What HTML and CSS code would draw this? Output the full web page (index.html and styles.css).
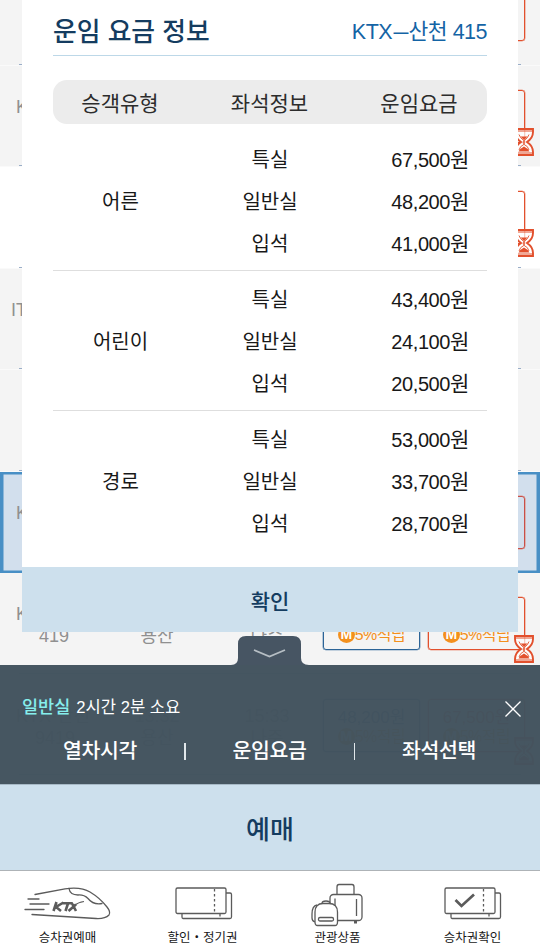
FILE: index.html
```html
<!DOCTYPE html>
<html lang="ko">
<head>
<meta charset="utf-8">
<title>운임 요금 정보</title>
<link rel="stylesheet" href="styles.css">
</head>
<body>
<svg width="0" height="0" class="defs">
  <symbol id="glass" viewBox="0 0 20 28">
    <path d="M1 1H19V4Q19 10 13 14Q19 18 19 24V27H1V24Q1 18 7 14Q1 10 1 4V1Z" fill="#fff" fill-opacity=".7" stroke="#e2502d" stroke-width="1.900"/>
    <path d="M1 3H19M1 25H19" stroke="#e2502d" stroke-width="1"/>
    <path d="M5 6.500Q6 10 9.800 12.500V16.500Q6 18 5 22M15 6.500Q14 10 10.200 12.500V16.500Q14 18 15 22" fill="none" stroke="#e2502d" stroke-width=".9"/>
    <path d="M6.500 8.500H13.500L10 12ZM4.500 23.500Q6 20.500 10 18.500Q14 20.500 15.500 23.500Z" fill="#e2502d"/>
  </symbol>
</svg>
<div class="phone">
  <main class="list">
    <div class="row"><div class="name"></div><div class="stop"></div><div class="stop"></div><div class="seat empty"></div><div class="seat special"></div></div>
    <div class="row"><div class="name">K</div><div class="stop"></div><div class="stop"></div><div class="seat empty"></div><div class="seat special"><svg class="glass"><use href="#glass"/></svg></div></div>
    <div class="row white"><div class="name"></div><div class="stop"></div><div class="stop"></div><div class="seat empty"></div><div class="seat special"><svg class="glass"><use href="#glass"/></svg></div></div>
    <div class="row"><div class="name it">IT</div></div>
    <div class="row"></div>
    <div class="row selected"><div class="name">K</div><div class="stop"></div><div class="stop"></div><div class="seat empty"></div><div class="seat special"></div></div>
    <div class="row"><div class="name">K<br><span class="num">419</span></div><div class="stop"><br>용산</div><div class="stop"><br>나주</div>
      <div class="seat"><span class="pt"><i>M</i>5%적립</span></div>
      <div class="seat special"><span class="pt"><i>M</i>5%적립</span><svg class="glass"><use href="#glass"/></svg></div></div>
    <div class="row"><div class="name">KTX-산천<br><span class="num wide">9419</span></div><div class="stop">13:32<br>용산</div><div class="stop">15:33<br>나주</div>
      <div class="seat"><span>48,200원</span><span class="pt"><i>M</i>5%적립</span></div>
      <div class="seat special"><span>67,500원</span><span class="pt"><i>M</i>5%적립</span><svg class="glass"><use href="#glass"/></svg></div></div>
  </main>

  <section class="modal">
    <header class="modal-head"><h1>운임 요금 정보</h1><span class="train">KTX<b>–</b>산천 415</span></header>
    <div class="thead"><span>승객유형</span><span>좌석정보</span><span>운임요금</span></div>
    <div class="group"><div class="who">어른</div><div class="kinds"><span>특실</span><span>일반실</span><span>입석</span></div><div class="fares"><span>67,500<b>원</b></span><span>48,200<b>원</b></span><span>41,000<b>원</b></span></div></div>
    <div class="group"><div class="who">어린이</div><div class="kinds"><span>특실</span><span>일반실</span><span>입석</span></div><div class="fares"><span>43,400<b>원</b></span><span>24,100<b>원</b></span><span>20,500<b>원</b></span></div></div>
    <div class="group"><div class="who">경로</div><div class="kinds"><span>특실</span><span>일반실</span><span>입석</span></div><div class="fares"><span>53,000<b>원</b></span><span>33,700<b>원</b></span><span>28,700<b>원</b></span></div></div>
    <button class="ok">확인</button>
  </section>

  <section class="sheet">
    <svg class="tab" width="78" height="29" viewBox="0 0 78 29"><path d="M0 29Q7 29 7 22V8Q7 0 15 0H62Q70 0 70 8V22Q70 29 78 29Z" fill="#475563"/><path d="M23 14L38.500 20.500L54 14" fill="none" stroke="#b6bec4" stroke-width="1.800"/></svg>
    <div class="panel">
      <div class="summary"><span><em>일반실</em>2시간 2분 소요</span>
        <svg width="18" height="18" viewBox="0 0 18 18"><path d="M1.500 1.500L16.500 16.500M16.500 1.500L1.500 16.500" stroke="#fff" stroke-width="1.300"/></svg></div>
      <div class="links"><span>열차시각</span><i></i><span>운임요금</span><i></i><span>좌석선택</span></div>
    </div>
    <button class="book">예매</button>
    <nav class="nav">
      <a><svg width="88" height="44" viewBox="0 0 88 44"><g fill="none" stroke="#5b5b5b" stroke-width="1.300" stroke-linecap="round"><path d="M12 15.500L42 9.800Q58 7.500 67 13Q77 19 84 28Q88 33 86 36Q82 40 73 39.500L9 35.500"/><path d="M46 9.500Q47 16 55 16Q61 15.500 65 19.500Q70 26 79 24.500"/><path d="M5 20H16M7 25H26M2 30.500H21"/></g><g fill="none" stroke="#5b5b5b" stroke-width="2.600"><path d="M33.500 23L30.500 32M40.500 23.500L33 28L38 32M40 24.300H49M45 24.500L42.500 32M48.500 23.500L53 32M45.500 32L53 25.500"/><path d="M52 26Q55 23.500 61 22.500" stroke-width="1.200"/></g></svg><span>승차권예매</span></a>
      <a><svg class="ticket" width="58" height="44" viewBox="0 0 58 44"><g fill="none" stroke="#5b5b5b" stroke-width="1.300"><rect x="1" y="9" width="50" height="25.500" rx="1.500"/><path d="M51 14H55Q56.500 14 56.500 15.500V38Q56.500 39.500 55 39.500H8Q7 39.500 7 38V34.500"/><path d="M39.500 10V34M45 35V39" stroke-dasharray="2.500 2.500"/></g></svg><span>할인・정기권</span></a>
      <a><svg width="54" height="44" viewBox="0 0 54 44"><g fill="none" stroke="#5b5b5b" stroke-width="1.300"><path d="M27 15.500V8Q27 5.500 29 5.500H42Q44 5.500 44 8V15.500"/><rect x="20" y="15.500" width="32" height="26" rx="3.500" fill="#fff"/><path d="M25 19.500V27M46.500 20V37"/><path d="M45.500 41.500V44.500" stroke-width="3"/><path d="M7 26Q2 27 2 35V39Q2 42 5 43M12 24.500Q12 22 16 22Q20 22 20 24.500"/><path d="M5 43V33Q5 24.500 13 24.500H19Q27.500 24.500 27.500 33V43Q27.500 46.500 25 46.500H7.500Q5 46.500 5 43Z" fill="#fff"/><rect x="8.500" y="38.500" width="15" height="3.500" rx="1.500"/></g></svg><span>관광상품</span></a>
      <a><svg width="58" height="44" viewBox="0 0 58 44"><g fill="none" stroke="#5b5b5b" stroke-width="1.300"><rect x="2" y="9" width="50" height="25.500" rx="1.500"/><path d="M52 14H56Q57.500 14 57.500 15.500V38Q57.500 39.500 56 39.500H9Q8 39.500 8 38V34.500"/><path d="M40.500 10V34M46 35V39" stroke-dasharray="2.500 2.500"/><path d="M12.500 21L18.500 27L31 15.500" stroke-width="2.700"/></g></svg><span>승차권확인</span></a>
    </nav>
  </section>
</div>
</body>
</html>
```
FILE: styles.css
```css
* { box-sizing: border-box; }
body { margin: 0; font-family: "Liberation Sans", "Noto Sans CJK KR", sans-serif; color: #181818; }
button { border: 0; padding: 0; font-family: inherit; width: 100%; display: block; }
h1, em, i, b { margin: 0; font-style: normal; font-weight: inherit; }
svg { overflow: visible; }
.defs { position: absolute; }
.phone { position: relative; width: 540px; height: 948px; overflow: hidden; background: #f4f4f4; }

/* train list */
.list { margin-top: -36px; color: #909090; }
.row { height: 101.5px; display: flex; align-items: flex-start; padding: 24px 15px 0 0; border-bottom: 1px solid #fafafa; font-size: 18px; line-height: 22px; background: linear-gradient(#9aaec8, #9aaec8) 19px 100% / 502px 1px no-repeat #f4f4f4; }
.row.white { background-color: #fff; }
.row.selected { background: #d2dfed; border: 2.5px solid #488fc5; border-width: 2px 3px; padding: 22px 12px 0 0; box-shadow: inset 0 0 0 .5px #488fc5; }
.row.selected .name { width: 105px; padding-left: 13px; }
.name { width: 108px; padding: 6px 0 0 16px; white-space: nowrap; }
.name.it { padding-left: 11px; }
.num { padding-left: 23px; }
.num.wide { padding-left: 19px; }
.stop { width: 98px; padding-top: 6px; text-align: center; }
.stop + .stop { width: 117px; padding-left: 5px; }
.seat { position: relative; width: 97px; height: 53px; border: 1.5px solid #2c6497; box-shadow: 0 0 0 .3px #2c6497; border-radius: 3px; color: #2c6497; font-size: 17px; line-height: 19px; display: flex; flex-direction: column; justify-content: flex-end; align-items: center; padding-bottom: 5px; }
.seat.special { margin-left: 8px; border-color: #e2502d; box-shadow: 0 0 0 .3px #e2502d; color: #e2502d; }
.selected .seat.special { border-color: #c94f48; }
.seat.empty { border-color: transparent; box-shadow: none; }
.pt { display: flex; align-items: center; color: #f3901d; font-size: 16px; letter-spacing: -.5px; }
.pt i { width: 17px; height: 17px; border-radius: 50%; background: #f3901d; color: #fff; font-size: 14px; font-weight: bold; line-height: 17px; text-align: center; }
.glass { position: absolute; width: 20px; height: 28px; right: -10px; top: 37px; }

/* fare dialog */
.modal { position: absolute; left: 22px; top: 0; width: 496px; height: 632px; background: #fff; }
.modal-head { margin: 0 31px 24px; height: 56px; border-bottom: 1px solid #bdd8e8; display: flex; justify-content: space-between; align-items: flex-start; padding-top: 14px; }
h1 { font-size: 25.8px; line-height: 36px; font-weight: 500; color: #143c60; }
.train { font-size: 21.5px; line-height: 36px; color: #1464a5; letter-spacing: -.5px; }
.train b { display: inline-block; transform: scaleX(1.25); margin: 0 2.5px; }
.thead, .group { display: grid; grid-template-columns: 134px 165px 134px; margin: 0 31px; text-align: center; }
.thead { height: 44px; line-height: 47px; border-radius: 14px; background: #ececec; font-size: 21px; color: #2c2c2c; margin-bottom: 6px; }
.group { height: 140px; padding: 9px 0 5px; font-size: 20px; line-height: 42px; }
.group + .group { border-top: 1px solid #dedede; padding-top: 8px; }
.who { align-self: center; padding-left: 1px; }
.kinds, .fares { display: flex; flex-direction: column; }
.kinds { padding-left: 1px; }
.fares { text-align: right; padding-right: 17px; letter-spacing: -.4px; }
.fares b { font-size: 21px; line-height: 1; }
.ok { position: absolute; bottom: 0; height: 65px; background: #cde0ed; color: #143c60; font-size: 21px; font-weight: 500; }

/* bottom sheet */
.sheet { position: absolute; left: 0; bottom: 0; width: 540px; height: 283px; }
.tab { position: absolute; left: 231px; top: -29px; }
.panel { height: 119px; background: rgba(66, 83, 94, .98); color: #fff; padding: 30px 18px 0 22px; }
.summary { display: flex; justify-content: space-between; height: 24px; line-height: 24px; font-size: 16.6px; }
.summary svg { margin-top: 5px; }
.summary em { color: #86efed; font-size: 17.5px; font-weight: 500; margin-right: 6px; }
.links { display: flex; align-items: center; font-size: 20.5px; font-weight: 500; line-height: 36px; padding-top: 14px; }
.links span { flex: none; width: 156px; margin-right: 6px; text-align: center; letter-spacing: -.3px; }
.links span + i + span { width: 168px; margin-right: 0; }
.links i { flex: none; width: 1.5px; height: 17px; background: #e1e7ea; }
.book { height: 86px; background: #cde0ed; border-top: 1px solid #a7b9c6; color: #143c60; font-size: 26px; font-weight: 500; }
.nav { height: 78px; display: grid; grid-template-columns: repeat(4, 1fr); background: #fff; border-top: 1px solid #aeb3b7; padding-top: 8px; }
.nav a { display: flex; flex-direction: column; align-items: center; font-size: 12.5px; line-height: 20px; }
.nav svg { margin-left: -2px; }
.nav .ticket { margin-left: 2px; }
.nav span { padding-top: 5px; white-space: nowrap; }
```
